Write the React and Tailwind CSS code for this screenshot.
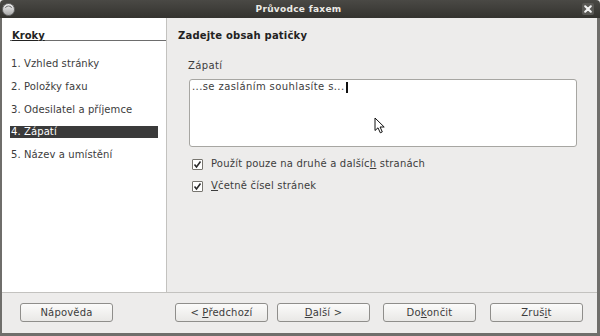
import React from "react";

const font = { fontFamily: '"DejaVu Sans", "Noto Sans", sans-serif' };

function Btn({ children, className = "" }) {
  return (
    <div
      className={
        "h-[19px] w-[93px] rounded-[3px] border border-[#8f8e8b] bg-gradient-to-b from-[#fbfbfa] to-[#e9e8e6] flex items-center justify-center text-[10px] leading-none text-[#3c3c3c] tracking-[0.2px] " +
        className
      }
    >
      {children}
    </div>
  );
}

function Check({ children }) {
  return (
    <div className="flex items-center h-[12px]">
      <div className="w-[11px] h-[11px] border border-[#77756f] bg-white rounded-[1px] flex items-center justify-center">
        <svg width="9" height="9" viewBox="0 0 9 9">
          <path d="M1.5 4.5 L3.5 7 L7.5 1.5" fill="none" stroke="#2a2a2a" strokeWidth="1.6" />
        </svg>
      </div>
      <span className="ml-[8px] text-[10px] leading-[12px] text-[#3c3c3c] tracking-[0.2px]">{children}</span>
    </div>
  );
}

export default function App() {
  const steps = [
    "1. Vzhled stránky",
    "2. Položky faxu",
    "3. Odesilatel a příjemce",
    "4. Zápatí",
    "5. Název a umístění",
  ];
  return (
    <div className="w-[600px] h-[336px] flex flex-col bg-[#edeceb] overflow-hidden" style={font}>
      {/* title bar */}
      <div className="h-[18px] flex items-center bg-gradient-to-b from-[#4a4945] to-[#34332f] rounded-t-[4px] px-[2px] relative">
        <div className="w-[13px] h-[13px] rounded-full bg-gradient-to-b from-[#f2f2f2] to-[#a9a9a9] border border-[#6e6e6e] flex items-center justify-center">
          <svg width="9" height="9" viewBox="0 0 9 9">
            <path d="M1.5 3 A3 2 0 0 1 7.5 3" fill="none" stroke="#555" strokeWidth="0.8" />
          </svg>
        </div>
        <div className="flex-1 text-center text-[9px] font-bold text-[#ecebe6] leading-none tracking-[0.3px]">
          Průvodce faxem
        </div>
        <div className="w-[12px] h-[12px] mr-[4px] rounded-[2px] bg-[#5a5955] flex items-center justify-center">
          <svg width="8" height="8" viewBox="0 0 8 8">
            <path d="M1.2 1.2 L6.8 6.8 M6.8 1.2 L1.2 6.8" stroke="#f4f4f4" strokeWidth="2" strokeLinecap="round" />
          </svg>
        </div>
      </div>
      {/* body */}
      <div className="flex-1 flex flex-col border-l-[2px] border-r-[3px] border-b-[3px] border-[#6f6e6b]">
        <div className="h-[275px] flex border-b border-[#c3c2bf]">
          {/* left panel */}
          <div className="w-[165px] bg-white border-r border-[#c3c2bf] flex flex-col">
            <div className="ml-[8px] mt-[12px] h-[11px] border-b border-[#6d6d6d] text-[10px] font-bold leading-[11px] text-[#222] pl-[2px]">
              <span className="underline underline-offset-[1px]">Kroky</span>
            </div>
            <div className="flex flex-col gap-[10.75px] mt-[17px] ml-[8px]">
              {steps.map((s, i) => (
                <div
                  key={s}
                  className={
                    "h-[12px] w-[148px] text-[10px] leading-[12px] pl-[1px] tracking-[0.1px] " +
                    (i === 3 ? "bg-[#3a3a3a] text-white" : "text-[#3c3c3c]")
                  }
                >
                  {s}
                </div>
              ))}
            </div>
          </div>
          {/* right panel */}
          <div className="flex-1 flex flex-col pl-[11px]">
            <div className="mt-[12px] text-[10px] font-bold leading-[12px] text-[#222] tracking-[0.2px]">
              Zadejte obsah patičky
            </div>
            <div className="ml-[10px] mt-[18px] text-[10px] leading-[12px] text-[#3c3c3c] tracking-[0.4px]">Zápatí</div>
            <div className="ml-[11px] mt-[7px] w-[388px] h-[68px] rounded-[3px] border border-[#a7a6a2] bg-white relative">
              <div className="pl-[2px] pt-[1px] text-[10px] leading-[12px] text-[#3c3c3c] flex items-center tracking-[0.4px]">
                <span>...se zasláním souhlasíte s...</span>
                <span className="inline-block w-[2px] h-[11px] bg-[#111] ml-[1px]" />
              </div>
              <svg className="absolute left-[184px] top-[37px]" width="12" height="17" viewBox="0 0 12 17">
                <path d="M1 1 L1 13.5 L4 10.8 L6.3 15.8 L8.3 14.9 L6.1 10 L10.2 10 Z" fill="#fff" stroke="#111" strokeWidth="1" strokeLinejoin="round" />
              </svg>
            </div>
            <div className="ml-[14px] mt-[11px] flex flex-col gap-[10px]">
              <Check>
                Použít pouze na druhé a dalšíc<span className="underline">h</span> stranách
              </Check>
              <Check>
                <span className="underline">V</span>četně čísel stránek
              </Check>
            </div>
          </div>
        </div>
        {/* buttons */}
        <div className="flex-1 flex items-start pt-[10px] pl-[18px]">
          <Btn>Nápověda</Btn>
          <Btn className="ml-[62px]">
            &lt; <span className="underline ml-[3px]">P</span>ředchozí
          </Btn>
          <Btn className="ml-[9px]">
            <span className="underline">D</span>alší &gt;
          </Btn>
          <Btn className="ml-[13px]">
            Do<span className="underline">k</span>ončit
          </Btn>
          <Btn className="ml-[14px]">
            Zruš<span className="underline">i</span>t
          </Btn>
        </div>
      </div>
    </div>
  );
}
